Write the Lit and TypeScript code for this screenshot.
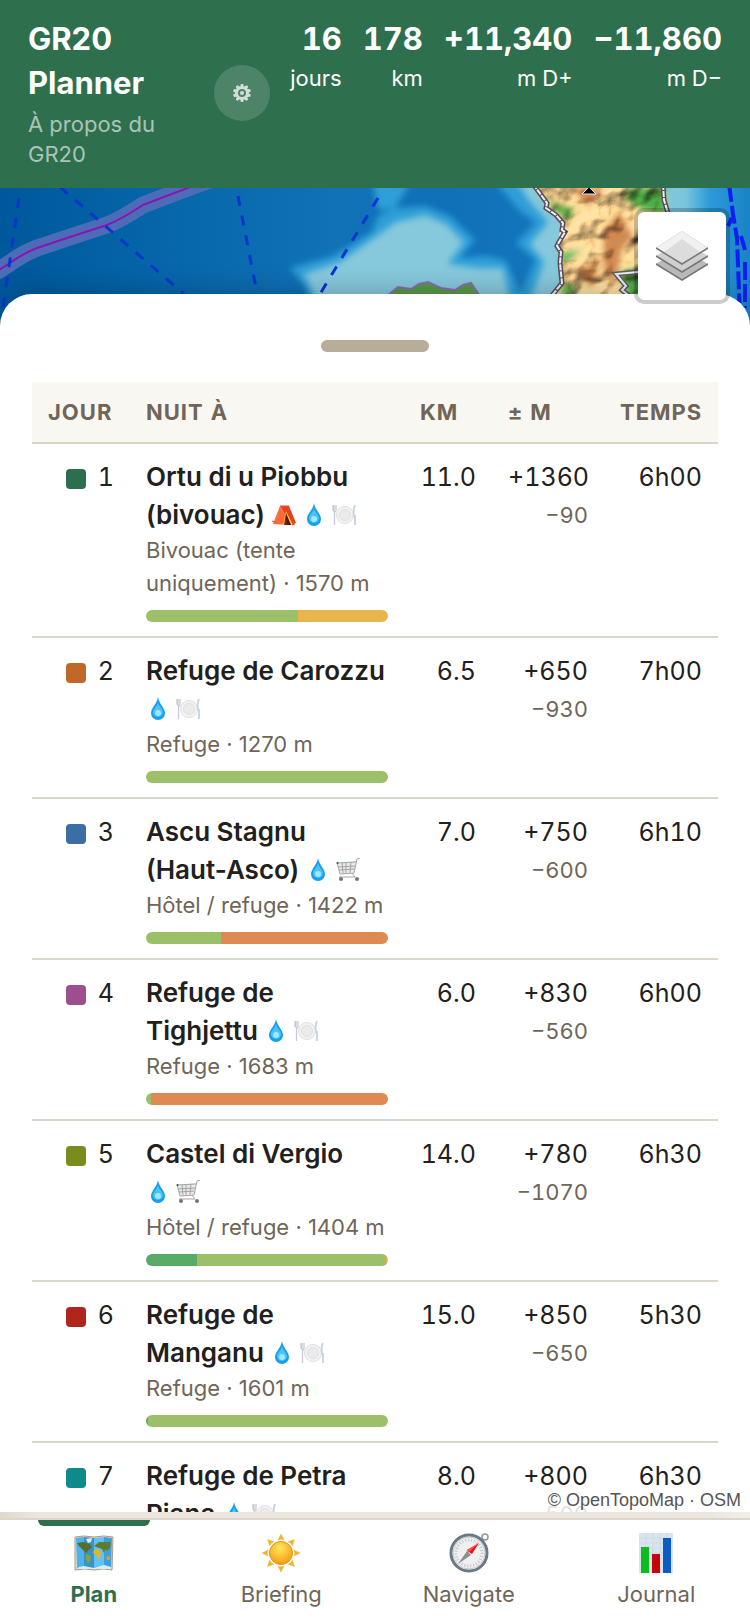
import { LitElement, html, css, svg } from 'lit';
import { customElement, property, state } from 'lit/decorators.js';
import { classMap } from 'lit/directives/class-map.js';

type Slope = 'flat' | 'easy' | 'medium' | 'hard';

interface Stage {
  day: number;
  color: string;
  name: string;
  amenities: string[];
  place: string;
  km: string;
  up: string;
  down: string;
  time: string;
  slopes: [Slope, number][];
}

const STAGES: Stage[] = [
  { day: 1, color: '#2d6e4e', name: 'Ortu di u Piobbu (bivouac)', amenities: ['tent', 'water', 'meal'], place: 'Bivouac (tente uniquement) · 1570 m', km: '11.0', up: '+1360', down: '−90', time: '6h00', slopes: [['easy', 63], ['medium', 37]] },
  { day: 2, color: '#c0682a', name: 'Refuge de Carozzu', amenities: ['water', 'meal'], place: 'Refuge · 1270 m', km: '6.5', up: '+650', down: '−930', time: '7h00', slopes: [['easy', 100]] },
  { day: 3, color: '#3c6ea6', name: 'Ascu Stagnu (Haut-Asco)', amenities: ['water', 'shop'], place: 'Hôtel / refuge · 1422 m', km: '7.0', up: '+750', down: '−600', time: '6h10', slopes: [['easy', 31], ['hard', 69]] },
  { day: 4, color: '#9c4f8c', name: 'Refuge de Tighjettu', amenities: ['water', 'meal'], place: 'Refuge · 1683 m', km: '6.0', up: '+830', down: '−560', time: '6h00', slopes: [['easy', 2], ['hard', 98]] },
  { day: 5, color: '#7a8c1e', name: 'Castel di Vergio', amenities: ['water', 'shop'], place: 'Hôtel / refuge · 1404 m', km: '14.0', up: '+780', down: '−1070', time: '6h30', slopes: [['flat', 21], ['easy', 78], ['medium', 1]] },
  { day: 6, color: '#b0261c', name: 'Refuge de Manganu', amenities: ['water', 'meal'], place: 'Refuge · 1601 m', km: '15.0', up: '+850', down: '−650', time: '5h30', slopes: [['flat', 1], ['easy', 99]] },
  { day: 7, color: '#0f8a8a', name: 'Refuge de Petra Piana', amenities: ['water', 'meal'], place: 'Refuge · 1842 m', km: '8.0', up: '+800', down: '−500', time: '6h30', slopes: [['easy', 70], ['hard', 30]] },
];

const TOTALS = [
  { value: '16', unit: 'jours' },
  { value: '178', unit: 'km' },
  { value: '+11,340', unit: 'm D+' },
  { value: '−11,860', unit: 'm D−' },
];

const TABS = [
  { id: 'plan', label: 'Plan' },
  { id: 'briefing', label: 'Briefing' },
  { id: 'navigate', label: 'Navigate' },
  { id: 'journal', label: 'Journal' },
];

const AMENITIES: Record<string, unknown> = {
  tent: svg`
    <path d="M8 3 17 3 24 20 19 22Z" fill="#e8401c"/>
    <path d="M8 3 1 21 19 22Z" fill="#ff6a3c"/>
    <path d="M14 8 11 22 21 22Z" fill="#ffc83c"/>
    <path d="M14 10 14 22 19 22Z" fill="#4a1608"/>
    <path d="M14 10 12 22 15 22Z" fill="#7a2a10"/>
    <path d="M0 18 3 19M17 3 8 3M20 22l3-1" stroke="#d9502c" fill="none"/>`,
  water: svg`
    <path d="M12 0C11 7 5 11 5 16a7 7 0 0 0 14 0C19 11 13 7 12 0Z" fill="#149ff0"/>
    <path d="M12 5C11 10 7 12 7 15a5 5 0 0 0 10 0C17 12 13 10 12 5Z" fill="#4cc4fa"/>
    <ellipse cx="12" cy="16" rx="3" ry="3" fill="#a4e6fe"/>`,
  meal: svg`
    <circle cx="13" cy="12" r="8.500" fill="#f3f3f3" stroke="#e0e0e2"/>
    <circle cx="13" cy="12" r="5.500" fill="#ebebec" stroke="#e0e0e2"/>
    <path d="M1 2v5q1 2 2 2t1-2V2M2 2v6M2.500 9v13" stroke="#c6cad3" stroke-width="1.300" fill="none"/>
    <path d="M23 2q-2 4-1 11h1v9" stroke="#ccd5e2" stroke-width="2" fill="none"/>`,
  shop: svg`
    <path d="M1 5 20 3 18 14 4 15Z" fill="#e9e9e9"/>
    <path d="M24 0 21 1 18 15 4 16 1 5 20 4M2 9 19 8M3 12 18 11M6 5 7 15M10 5v10M15 4l-1 11M16 15l3 4H3" stroke="#a3a3a5" stroke-width="1" fill="none"/>
    <circle cx="5" cy="21" r="2" fill="#7d7276"/>
    <circle cx="21" cy="21" r="2" fill="#7d7276"/>
    <circle cx="1.500" cy="5" r="1" fill="#255"/>`,
};

const TAB_ICONS: Record<string, unknown> = {
  plan: svg`
    <path d="M1 4 10 3 20 4 30 3 39 4 38 37 29 36 20 37 11 36 1 37Z" fill="#f0d9bd" stroke="#b39a82"/>
    <path d="M2 5 10 4V35L3 36Z" fill="#49b4ee"/>
    <path d="M10 4 20 5V36L10 35Z" fill="#3a92c8"/>
    <path d="M20 5 30 4V35L20 36Z" fill="#62c2f4"/>
    <path d="M30 4 38 5 37 36 30 35Z" fill="#3da2dc"/>
    <path d="M3 10 9 9 16 11 18 14 14 18 12 20 9 17 5 13Z" fill="#56702c"/>
    <path d="M12 21 17 23 16 28 14 31 12 26Z" fill="#84a63a"/>
    <path d="M20 13 25 9 37 9 36 15 33 18 31 16 30 20 28 16 25 15Z" fill="#5d7c2e"/>
    <path d="M20 17 25 16 27 20 25 27 22 22 19 20Z" fill="#e0b52c"/>
    <path d="M32 24 36 23 36 27 33 27Z" fill="#e49a28"/>
    <path d="M12 6 18 5 17 9 14 10ZM5 34 10 33 20 35 30 32 37 34V36H3Z" fill="#dcecf5"/>`,
  briefing: svg`
    <defs>
      <radialGradient id="sun" cx=".45" cy=".3" r=".75">
        <stop offset="0" stop-color="#ffe95c"/><stop offset="1" stop-color="#f3960f"/>
      </radialGradient>
    </defs>
    <g fill="#f7b50f" stroke="#e8b260" stroke-width=".5">
      ${[0, 45, 90, 135, 180, 225, 270, 315].map(
        a => svg`<path d="M17 7 20 1 23 7Q20 5.500 17 7Z" transform="rotate(${a} 20 20)"/>`
      )}
    </g>
    <circle cx="20" cy="20" r="11.500" fill="url(#sun)" stroke="#e29412"/>`,
  navigate: svg`
    <circle cx="36" cy="4" r="3" fill="none" stroke="#8c99a5" stroke-width="1.500"/>
    <circle cx="20" cy="20" r="18" fill="#f0f0f0" stroke="#6d7885" stroke-width="3"/>
    <circle cx="20" cy="20" r="16" fill="none" stroke="#c3cad1"/>
    <circle cx="20" cy="20" r="13" fill="none" stroke="#c4c4c4" stroke-width="3" stroke-dasharray="1 2"/>
    <path d="M18 18 22 22 9 31Z" fill="#8d8f91"/>
    <path d="M18 17 30 10 23 21Q21 20 18 17Z" fill="#e4141b"/>
    <path d="M18 17 30 10 19 20Z" fill="#ff5050"/>`,
  journal: svg`
    <path d="M3 0H37V40H3Z" fill="#d9e4ec"/>
    <path d="M3 5H37M3 10H37M3 15H37M3 20H37M3 25H37M3 30H37M10 0V40M17 0V40M24 0V40M31 0V40" stroke="#c6d6e2" stroke-width=".5"/>
    <path d="M5 14H13V40H5Z" fill="#0bbd1d"/>
    <path d="M16 21H24V40H16Z" fill="#c4060c"/>
    <path d="M27 5H35V40H27Z" fill="#0b5cc4"/>`,
};

@customElement('topo-map')
class TopoMap extends LitElement {
  static styles = css`
    :host {
      display: block;
      height: 144px;
      position: relative;
      background: #0b67ad;
    }

    .canvas {
      display: block;
      width: 100%;
      height: 100%;
    }

    .layers {
      position: absolute;
      z-index: 3;
      top: 20px;
      right: 20px;
      width: 96px;
      height: 96px;
      padding: 0;
      border: 4px solid rgba(0, 0, 0, 0.2);
      border-radius: 10px;
      background: #fff;
      background-clip: padding-box;
      display: grid;
      place-items: center;
      cursor: pointer;
    }
  `;

  render() {
    return html`
      <svg class="canvas" viewBox="0 0 750 144" preserveAspectRatio="xMidYMin slice" aria-hidden="true">
        <defs>
          <linearGradient id="sea">
            <stop offset="0" stop-color="#00589c"/>
            <stop offset=".2" stop-color="#0565a8"/>
            <stop offset=".45" stop-color="#1272b8"/>
            <stop offset=".6" stop-color="#1070b8"/>
            <stop offset="1" stop-color="#1b84c8"/>
          </linearGradient>
          <linearGradient id="coast">
            <stop offset="0" stop-color="#86c8dc"/>
            <stop offset=".35" stop-color="#7cc4de"/>
            <stop offset=".6" stop-color="#2b9ad8"/>
            <stop offset="1" stop-color="#1a82c6"/>
          </linearGradient>
          <filter id="soft" x="-10%" y="-20%" width="120%" height="140%">
            <feGaussianBlur stdDeviation="3"/>
          </filter>
          <filter id="relief" x="0" y="0" width="100%" height="100%" color-interpolation-filters="sRGB">
            <feTurbulence type="fractalNoise" baseFrequency=".025 .03" numOctaves="3" seed="8"/>
            <feColorMatrix values="0 0 0 0 0  0 0 0 0 0  0 0 0 0 0  1 0 0 0 0"/>
            <feDiffuseLighting surfaceScale="9" diffuseConstant="1.250" lighting-color="#fff0dc">
              <feDistantLight azimuth="225" elevation="52"/>
            </feDiffuseLighting>
            <feComposite operator="in" in2="SourceAlpha" result="shade"/>
            <feBlend mode="multiply" in="SourceGraphic" in2="shade"/>
          </filter>
        </defs>
        <rect width="750" height="144" fill="url(#sea)"/>
        <g filter="url(#soft)">
          <path d="M290 80 333 68 372 44 378 28 395 20 410 -4 372 -8 378 22 425 18 450 28 475 52 460 70 485 68 505 72 516 95 520 106 525 95 536 72 516 55 536 35 519 22 494 -8H570V150H325L305 98Z" fill="#2f9fd8"/>
        </g>
        <g filter="url(#soft)">
          <path d="M304 86 340 74 374 50 396 34 425 27 446 36 464 54 448 76 480 80 503 80 510 112 530 112 544 74 530 56 548 34 530 14 516 -8H580V150H336Z" fill="#86c8dc"/>
        </g>
        <path d="M660 0H750V144H650Z" fill="url(#coast)"/>
        <path d="M387 108 398 99 411 101 419 96 428 94 441 100 455 102 463 97 471 95 480 108Z" fill="#569a46" stroke="#8c6bae" stroke-width="2"/>
        <g filter="url(#relief)">
          <path d="M533 -4 547 15 556 27 563 35 559 48 557 58 561 75 562 95 550 110 550 144H680L674 60 668 25 663 -4Z" fill="#ffe2a8"/>
          <g filter="url(#soft)">
            <path d="M533 0 550 14 575 22 568 32 556 24ZM626 0H664L668 26 644 22 628 14ZM560 66 582 62 562 76ZM620 84 645 80V112H630ZM563 95 580 100 560 112Z" fill="#4cae4a"/>
            <path d="M604 44 618 24 634 50 622 60 616 96 604 84ZM570 -2 604 2 588 18ZM576 84 600 70 592 100Z" fill="#cf8a55"/>
          </g>
        </g>
        <g fill="none">
          <path d="M533 -4 547 15 546 20 556 27 563 35 562 42 565 44 559 54 557 58 561 64 560 75 562 95 550 110M663 -4 664 12 668 25" stroke="#554a5e" stroke-width="5"/>
          <path d="M533 -4 547 15 546 20 556 27 563 35 562 42 565 44 559 54 557 58 561 64 560 75 562 95 550 110M663 -4 664 12 668 25" stroke="#eee" stroke-width="2" stroke-dasharray="6 1"/>
          <path d="M638 84 616 86 626 98 622 102 634 112" stroke="#5a5a66" stroke-width="5"/>
          <path d="M638 84 616 86 626 98 622 102 634 112" stroke="#e4edf2" stroke-width="2"/>
          <path d="M-4 84 10 75Q22 66 37 60L70 49 107 37Q120 32 143 17L190 -1 210 -8" stroke="#4d6cb8" stroke-width="17" stroke-linejoin="round"/>
          <path d="M-4 84 10 75Q22 66 37 60L70 49 107 37Q120 32 143 17L190 -1 210 -8" stroke="#8a14b0" stroke-width="2"/>
          <path d="M19 10 3 120M60 -1 184 106M238 8 256 100M378 10 320 106" stroke="#0b35cc" stroke-width="3" stroke-dasharray="10 10"/>
          <path d="M729 -4 733 26 737 50 740 130M745 74V120M732 30 728 38M741 48 745 62" stroke="#0f1ff0" stroke-width="4" stroke-dasharray="18 4"/>
        </g>
        <path d="M582 6 589 -1 596 6Z" fill="#000" stroke="#e8e8e8"/>
      </svg>
      <button class="layers" aria-label="Couches">
        <svg width="52" height="50" viewBox="0 0 52 50" aria-hidden="true">
          <path d="M0 33 26 17 52 33 26 49Z" fill="#b9b9b9"/>
          <path d="M0 33 26 49 52 33" fill="none" stroke="#777" stroke-width="1.500"/>
          <path d="M0 25 26 9 52 25 26 41Z" fill="#cfcfcf"/>
          <path d="M0 25 26 41 52 25" fill="none" stroke="#777" stroke-width="1.500"/>
          <path d="M0 17 26 0 52 17 26 33Z" fill="#f1f1f1" stroke="#ccc" stroke-width=".5"/>
          <path d="M8 21 26 8 44 21 26 32Z" fill="#dcdcdc"/>
          <path d="M0 17 26 33 52 17" fill="none" stroke="#777" stroke-width="1.500"/>
        </svg>
      </button>
    `;
  }
}

@customElement('stage-table')
class StageTable extends LitElement {
  @property({ attribute: false }) stages: Stage[] = [];

  static styles = css`
    :host {
      display: block;
    }

    table {
      width: 100%;
      table-layout: fixed;
      border-collapse: separate;
      border-spacing: 0;
      font-variant-numeric: tabular-nums;
    }

    .col-day {
      width: 98px;
    }

    .col-km {
      width: 88px;
    }

    .col-climb {
      width: 112px;
    }

    .col-time {
      width: 114px;
    }

    th {
      padding: 14px 16px;
      background: #f9f7f2;
      border-bottom: 2px solid #ddd5c9;
      color: #6f6558;
      font-size: 22px;
      font-weight: 700;
      line-height: 32px;
      letter-spacing: 1px;
      text-align: left;
      text-transform: uppercase;
      white-space: nowrap;
    }

    td {
      padding: 14px 16px;
      border-bottom: 2px solid #ddd5c9;
      font-size: 25px;
      line-height: 38px;
      text-align: right;
      vertical-align: top;
      white-space: nowrap;
    }

    th.end {
      text-align: right;
    }

    td.night {
      font-variant-numeric: normal;
      text-align: left;
      white-space: normal;
    }

    .swatch {
      display: inline-block;
      width: 20px;
      height: 20px;
      margin-right: 12px;
      border-radius: 4px;
      vertical-align: -3px;
    }

    .name {
      font-size: 26px;
      font-weight: 600;
    }

    .amenities {
      display: inline-flex;
      gap: 6px;
      vertical-align: -3px;
    }

    .place,
    .down {
      color: #6f6558;
      font-size: 22px;
    }

    .place {
      line-height: 33px;
    }

    .slopes {
      display: flex;
      height: 12px;
      margin-top: 10px;
      border-radius: 6px;
      overflow: hidden;
    }

    .flat {
      background: #5aab68;
    }

    .easy {
      background: #9cc069;
    }

    .medium {
      background: #e9b44c;
    }

    .hard {
      background: #df8a52;
    }
  `;

  renderStage(stage: Stage) {
    return html`
      <tr>
        <td><span class="swatch" style="background: ${stage.color}"></span>${stage.day}</td>
        <td class="night">
          <div class="name">
            ${stage.name}
            <span class="amenities">
              ${stage.amenities.map(
                key => html`<svg width="24" height="24" viewBox="0 0 24 24" aria-hidden="true">${AMENITIES[key]}</svg>`
              )}
            </span>
          </div>
          <div class="place">${stage.place}</div>
          <div class="slopes">
            ${stage.slopes.map(([slope, share]) => html`<span class=${slope} style="width: ${share}%"></span>`)}
          </div>
        </td>
        <td>${stage.km}</td>
        <td>
          <div>${stage.up}</div>
          <div class="down">${stage.down}</div>
        </td>
        <td>${stage.time}</td>
      </tr>
    `;
  }

  render() {
    return html`
      <table>
        <colgroup>
          <col class="col-day">
          <col>
          <col class="col-km">
          <col class="col-climb">
          <col class="col-time">
        </colgroup>
        <thead>
          <tr>
            <th>Jour</th>
            <th>Nuit à</th>
            <th>km</th>
            <th>± m</th>
            <th class="end">Temps</th>
          </tr>
        </thead>
        <tbody>
          ${this.stages.map(stage => this.renderStage(stage))}
        </tbody>
      </table>
    `;
  }
}

@customElement('app-root')
class AppRoot extends LitElement {
  @state() tab = 'plan';

  static styles = css`
    :host {
      display: flex;
      flex-direction: column;
      height: 100vh;
      overflow: hidden;
      position: relative;
      background: #fff;
      color: #22201b;
      font-family: Inter, 'Liberation Sans', sans-serif;
    }

    header {
      display: flex;
      align-items: center;
      gap: 20px;
      padding: 17px 28px 19px;
      background: #2e6f4e;
      color: #fff;
    }

    .brand {
      flex: 1;
      min-width: 0;
      display: grid;
      gap: 4px;
    }

    h1 {
      margin: 0;
      font-size: 31px;
      font-weight: 700;
      line-height: 44px;
    }

    .about {
      max-width: 150px;
      color: rgba(255, 255, 255, 0.6);
      font-size: 22px;
      line-height: 30px;
      text-decoration: none;
    }

    .settings {
      width: 56px;
      height: 56px;
      padding: 0;
      border: 0;
      border-radius: 50%;
      background: rgba(255, 255, 255, 0.15);
      display: grid;
      place-items: center;
      cursor: pointer;
    }

    .totals {
      display: flex;
      align-self: flex-start;
      gap: 21px;
      margin: 0;
      text-align: right;
      font-variant-numeric: tabular-nums;
    }

    .total {
      display: flex;
      flex-direction: column-reverse;
      justify-content: flex-end;
    }

    dt {
      font-size: 22px;
      line-height: 34px;
    }

    dd {
      margin: 0;
      font-size: 31px;
      font-weight: 700;
      line-height: 44px;
    }

    main {
      flex: 1;
      min-height: 0;
      display: flex;
      flex-direction: column;
      overflow: hidden;
      position: relative;
    }

    topo-map {
      flex: none;
    }

    .sheet {
      flex: 1;
      min-height: 0;
      overflow: hidden;
      margin-top: -38px;
      padding: 0 32px;
      border-radius: 32px 32px 0 0;
      background: #fff;
      box-shadow: 0 -4px 24px rgba(0, 0, 0, 0.2);
      z-index: 1;
    }

    .grip {
      display: block;
      width: 108px;
      height: 12px;
      margin: 46px auto 30px;
      padding: 0;
      border: 0;
      border-radius: 6px;
      background: #b8ad99;
    }

    .credit {
      position: absolute;
      z-index: 2;
      right: 0;
      bottom: 0;
      padding: 0 9px 0 10px;
      background: rgba(255, 255, 255, 0.8);
      color: #555;
      font-family: 'Liberation Sans', Arial, sans-serif;
      font-size: 18px;
      line-height: 24px;
    }

    .edge {
      height: 6px;
      background: linear-gradient(90deg, #ddd8cf, #ebe7e0 5%, #ebe7e0 95%, #f2efea);
    }

    nav {
      display: flex;
      border-top: 2px solid #ddd5c9;
      background: #fff;
    }

    .tab {
      flex: 1;
      display: flex;
      flex-direction: column;
      align-items: center;
      gap: 5px;
      padding: 13px 0 14px;
      position: relative;
      color: #6f6558;
      font-size: 22px;
      line-height: 32px;
      text-decoration: none;
    }

    .tab.active {
      color: #2e6f4e;
      font-weight: 700;
    }

    .tab.active::before {
      content: '';
      position: absolute;
      top: 0;
      left: 20%;
      right: 20%;
      height: 6px;
      border-radius: 0 0 6px 6px;
      background: #2e6f4e;
    }
  `;

  selectTab(e: Event, id: string) {
    e.preventDefault();
    this.tab = id;
  }

  render() {
    return html`
      <header>
        <div class="brand">
          <h1>GR20 Planner</h1>
          <a class="about" href="#about">À propos du GR20</a>
        </div>
        <button class="settings" aria-label="Réglages">
          <svg width="18" height="18" viewBox="0 0 18 18" aria-hidden="true">
            <g fill="#d0dfd7">
              ${[0, 36, 72, 108, 144].map(a => svg`<rect x="7.500" y="0" width="3" height="18" rx="1" transform="rotate(${a} 9 9)"/>`)}
              <circle cx="9" cy="9" r="7"/>
            </g>
            <circle cx="9" cy="9" r="3" fill="none" stroke="#4e8468" stroke-width="2"/>
          </svg>
        </button>
        <dl class="totals">
          ${TOTALS.map(total => html`
            <div class="total">
              <dt>${total.unit}</dt>
              <dd>${total.value}</dd>
            </div>
          `)}
        </dl>
      </header>
      <main>
        <topo-map></topo-map>
        <section class="sheet">
          <button class="grip" aria-label="Agrandir le panneau"></button>
          <stage-table .stages=${STAGES}></stage-table>
        </section>
        <div class="credit">© OpenTopoMap · OSM</div>
      </main>
      <div class="edge"></div>
      <nav>
        ${TABS.map(tab => html`
          <a
            href="#${tab.id}"
            class=${classMap({ tab: true, active: this.tab === tab.id })}
            @click=${(e: Event) => this.selectTab(e, tab.id)}
          >
            <svg width="40" height="40" viewBox="0 0 40 40" aria-hidden="true">${TAB_ICONS[tab.id]}</svg>
            ${tab.label}
          </a>
        `)}
      </nav>
    `;
  }
}
